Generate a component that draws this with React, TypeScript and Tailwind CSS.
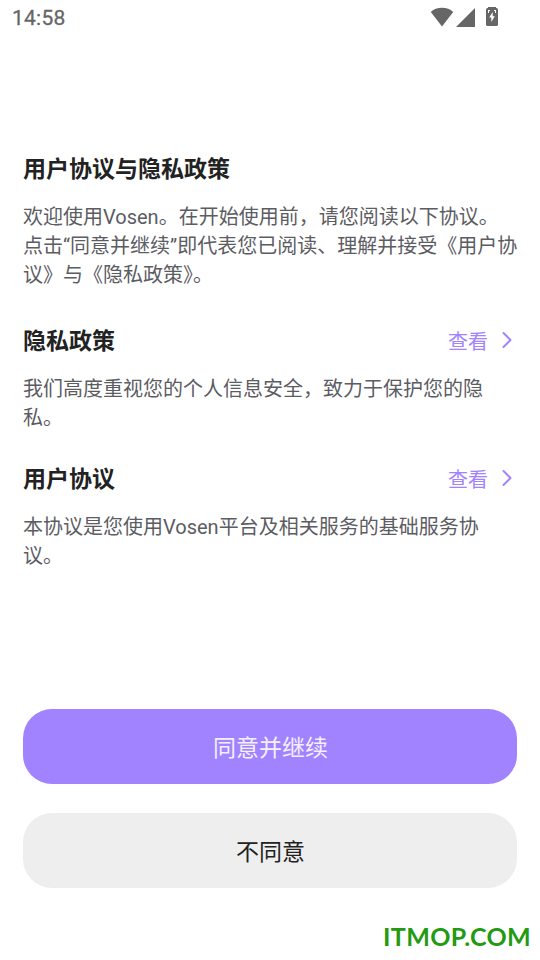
import React from "react";

type Policy = {
    title: string;
    body: string;
};

const policies: Policy[] = [
    { title: "隐私政策", body: "我们高度重视您的个人信息安全，致力于保护您的隐私。" },
    { title: "用户协议", body: "本协议是您使用Vosen平台及相关服务的基础服务协议。" },
];

function StatusBar() {
    return (
        <header className="flex h-9 items-center justify-between pl-3 pr-[42px] text-[#666]">
            <span className="pt-0.5 text-[21px] tracking-[0.25px] [-webkit-text-stroke:0.3px_#666]">14:58</span>
            <div className="flex items-center pb-1">
                <svg className="mt-0.5" width="24" height="20" viewBox="0 0 24 20" fill="currentColor">
                    <path d="M12 19.500 0.800 5C3.800 2.200 7.400 0.800 12 0.800s8.200 1.400 11.200 4.200Z" />
                </svg>
                <svg className="ml-0.5 mt-0.5" width="19" height="19" viewBox="0 0 19 19" fill="currentColor">
                    <path d="M0 19 19 0v19Z" />
                </svg>
                <svg className="ml-[11px]" width="12" height="19" viewBox="0 0 12 19">
                    <path fill="currentColor" d="M2 0h8v1h1l1 1.500v15.500l-1 1H1l-1-1V2.500L1 1h1Z" />
                    <path fill="white" d="M2 3h2v1H3v2H2ZM8 3h2v3H9V4H8ZM6.700 5 3.200 10.500h2.100V15L8.800 9.300H6.700Z" />
                </svg>
            </div>
        </header>
    );
}

function PolicyRow({ title, body }: Policy) {
    return (
        <section>
            <div className="flex h-[34px] items-center justify-between">
                <h2 className="text-[23px] font-bold leading-[34px] text-[#222]">{title}</h2>
                <button type="button" className="flex items-center pr-1 text-[20px] text-[#a183ff]">
                    查看
                    <svg
                        className="mb-1 ml-[13px] mr-px"
                        width="11"
                        height="18"
                        viewBox="0 0 11 18"
                        fill="none"
                        stroke="currentColor"
                        strokeWidth="2"
                        strokeLinecap="round"
                        strokeLinejoin="round"
                    >
                        <path d="m2.500 2 7 7-7 7" />
                    </svg>
                </button>
            </div>
            <p className="mt-4 text-[20px] leading-[29px] text-[#5c5c63]">{body}</p>
        </section>
    );
}

export default function App() {
    return (
        <div className="relative flex h-[960px] w-[540px] flex-col overflow-hidden bg-white font-['Roboto','Noto_Sans_CJK_SC',sans-serif]">
            <StatusBar />
            <main className="px-[23px] pt-[117px]">
                <h1 className="text-[23px] font-bold leading-[34px] text-[#222]">用户协议与隐私政策</h1>
                <p className="-mr-1 mt-4 text-[20px] leading-[29px] text-[#5c5c63]">
                    欢迎使用Vosen。在开始使用前，请您阅读以下协议。
                    <br />
                    点击“同意并继续”即代表您已阅读、理解并接受《用户协议》与《隐私政策》。
                </p>
                <div className="mt-[35px] flex flex-col gap-[30px]">
                    {policies.map((p) => (
                        <PolicyRow key={p.title} {...p} />
                    ))}
                </div>
            </main>
            <footer className="mt-auto flex flex-col gap-[29px] px-[23px] pb-[72px]">
                <button type="button" className="h-[75px] rounded-[29px] bg-[#a183ff] pl-px pt-1.5 text-[23px] text-[#f3effc]">同意并继续</button>
                <button type="button" className="h-[75px] rounded-[29px] bg-[#eee] pl-px pt-1.5 text-[23px] text-[#222]">不同意</button>
            </footer>
            <div className="absolute bottom-[5px] right-[9px] font-['Lato',sans-serif] text-[25px] font-bold tracking-[0.35px] text-[#229a12]">ITMOP.COM</div>
        </div>
    );
}
